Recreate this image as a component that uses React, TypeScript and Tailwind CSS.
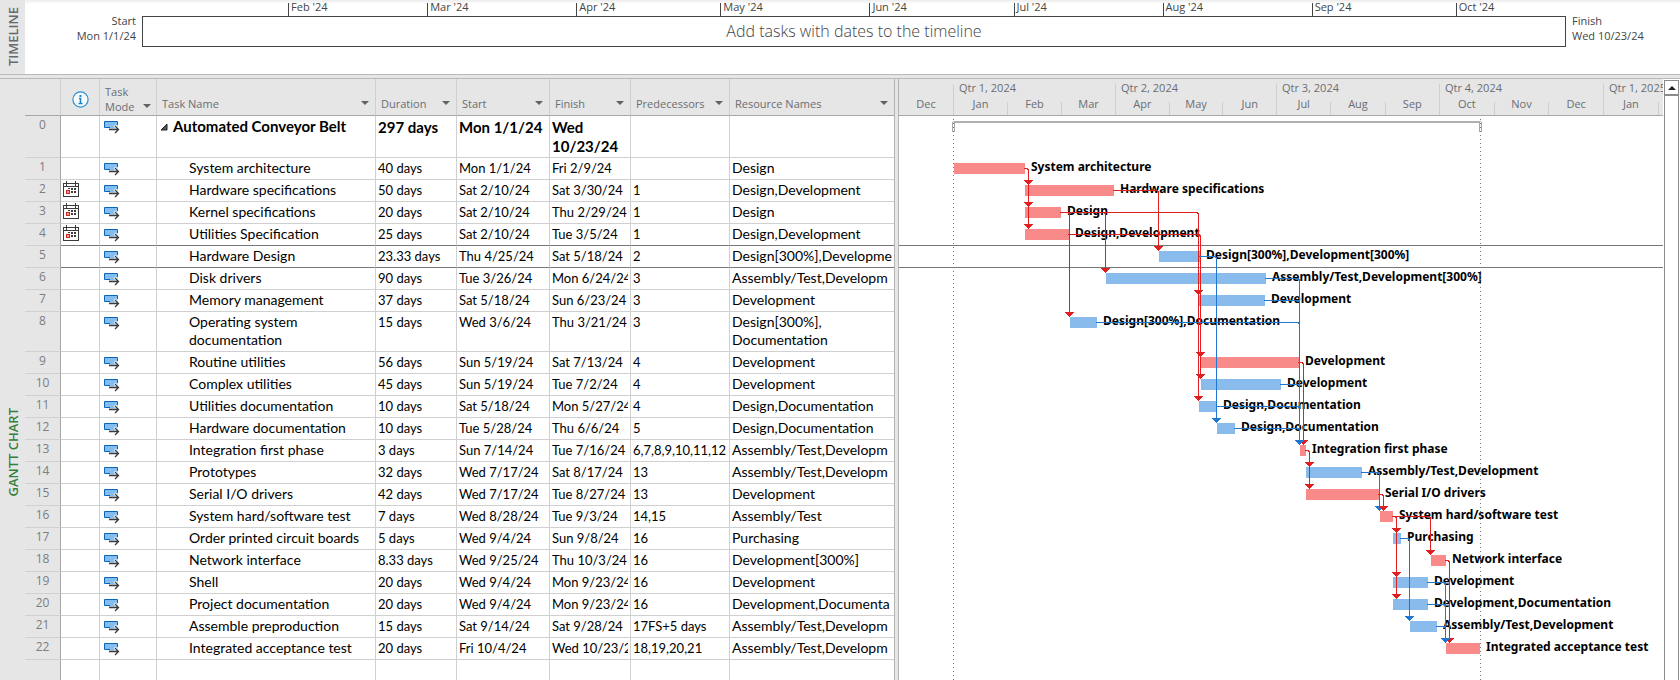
import React from "react";

type Task = {
  id: number;
  name: string;
  duration: string;
  start: string;
  finish: string;
  pred: string;
  res: string;
  calendar?: boolean;
  bar?: [number, number];
  critical?: boolean;
  label?: string;
};

const TASKS: Task[] = [
  { id: 0, name: "Automated Conveyor Belt", duration: "297 days", start: "Mon 1/1/24", finish: "Wed 10/23/24", pred: "", res: "" },
  { id: 1, name: "System architecture", duration: "40 days", start: "Mon 1/1/24", finish: "Fri 2/9/24", pred: "", res: "Design", bar: [55, 126], critical: true, label: "System architecture" },
  { id: 2, name: "Hardware specifications", duration: "50 days", start: "Sat 2/10/24", finish: "Sat 3/30/24", pred: "1", res: "Design,Development", calendar: true, bar: [126, 215], critical: true, label: "Hardware specifications" },
  { id: 3, name: "Kernel specifications", duration: "20 days", start: "Sat 2/10/24", finish: "Thu 2/29/24", pred: "1", res: "Design", calendar: true, bar: [126, 162], critical: true, label: "Design" },
  { id: 4, name: "Utilities Specification", duration: "25 days", start: "Sat 2/10/24", finish: "Tue 3/5/24", pred: "1", res: "Design,Development", calendar: true, bar: [126, 170], critical: true, label: "Design,Development" },
  { id: 5, name: "Hardware Design", duration: "23.33 days", start: "Thu 4/25/24", finish: "Sat 5/18/24", pred: "2", res: "Design[300%],Development[300%]", bar: [260, 301], label: "Design[300%],Development[300%]" },
  { id: 6, name: "Disk drivers", duration: "90 days", start: "Tue 3/26/24", finish: "Mon 6/24/24", pred: "3", res: "Assembly/Test,Development[300%]", bar: [207, 367], label: "Assembly/Test,Development[300%]" },
  { id: 7, name: "Memory management", duration: "37 days", start: "Sat 5/18/24", finish: "Sun 6/23/24", pred: "3", res: "Development", bar: [300, 366], label: "Development" },
  { id: 8, name: "Operating system documentation", duration: "15 days", start: "Wed 3/6/24", finish: "Thu 3/21/24", pred: "3", res: "Design[300%], Documentation", bar: [171, 198], label: "Design[300%],Documentation" },
  { id: 9, name: "Routine utilities", duration: "56 days", start: "Sun 5/19/24", finish: "Sat 7/13/24", pred: "4", res: "Development", bar: [302, 400], critical: true, label: "Development" },
  { id: 10, name: "Complex utilities", duration: "45 days", start: "Sun 5/19/24", finish: "Tue 7/2/24", pred: "4", res: "Development", bar: [302, 382], label: "Development" },
  { id: 11, name: "Utilities documentation", duration: "10 days", start: "Sat 5/18/24", finish: "Mon 5/27/24", pred: "4", res: "Design,Documentation", bar: [300, 318], label: "Design,Documentation" },
  { id: 12, name: "Hardware documentation", duration: "10 days", start: "Tue 5/28/24", finish: "Thu 6/6/24", pred: "5", res: "Design,Documentation", bar: [318, 336], label: "Design,Documentation" },
  { id: 13, name: "Integration first phase", duration: "3 days", start: "Sun 7/14/24", finish: "Tue 7/16/24", pred: "6,7,8,9,10,11,12", res: "Assembly/Test,Development", bar: [401, 407], critical: true, label: "Integration first phase" },
  { id: 14, name: "Prototypes", duration: "32 days", start: "Wed 7/17/24", finish: "Sat 8/17/24", pred: "13", res: "Assembly/Test,Development", bar: [407, 463], label: "Assembly/Test,Development" },
  { id: 15, name: "Serial I/O drivers", duration: "42 days", start: "Wed 7/17/24", finish: "Tue 8/27/24", pred: "13", res: "Development", bar: [407, 480], critical: true, label: "Serial I/O drivers" },
  { id: 16, name: "System hard/software test", duration: "7 days", start: "Wed 8/28/24", finish: "Tue 9/3/24", pred: "14,15", res: "Assembly/Test", bar: [481, 494], critical: true, label: "System hard/software test" },
  { id: 17, name: "Order printed circuit boards", duration: "5 days", start: "Wed 9/4/24", finish: "Sun 9/8/24", pred: "16", res: "Purchasing", bar: [494, 502], label: "Purchasing" },
  { id: 18, name: "Network interface", duration: "8.33 days", start: "Wed 9/25/24", finish: "Thu 10/3/24", pred: "16", res: "Development[300%]", bar: [532, 547], critical: true, label: "Network interface" },
  { id: 19, name: "Shell", duration: "20 days", start: "Wed 9/4/24", finish: "Mon 9/23/24", pred: "16", res: "Development", bar: [494, 529], label: "Development" },
  { id: 20, name: "Project documentation", duration: "20 days", start: "Wed 9/4/24", finish: "Mon 9/23/24", pred: "16", res: "Development,Documentation", bar: [494, 529], label: "Development,Documentation" },
  { id: 21, name: "Assemble preproduction", duration: "15 days", start: "Sat 9/14/24", finish: "Sat 9/28/24", pred: "17FS+5 days", res: "Assembly/Test,Development", bar: [511, 538], label: "Assembly/Test,Development" },
  { id: 22, name: "Integrated acceptance test", duration: "20 days", start: "Fri 10/4/24", finish: "Wed 10/23/24", pred: "18,19,20,21", res: "Assembly/Test,Development", bar: [547, 581], critical: true, label: "Integrated acceptance test" },
];

/* [from task, x of the vertical run, target tasks, critical] */
const LINKS: [number, number, number[], boolean][] = [
  [1, 129, [2, 3, 4], true],
  [2, 259, [5], true],
  [3, 206, [6], true],
  [3, 170, [8], true],
  [3, 299, [7], true],
  [4, 299, [11], true],
  [4, 301, [9, 10], true],
  [5, 317, [12], false],
  [9, 404, [13], true],
  [6, 400, [13], false],
  [7, 400, [13], false],
  [8, 400, [13], false],
  [10, 400, [13], false],
  [11, 400, [13], false],
  [12, 400, [13], false],
  [13, 410, [14, 15], true],
  [14, 480, [16], false],
  [15, 484, [16], true],
  [16, 497, [17, 19, 20], true],
  [16, 531, [18], true],
  [17, 510, [21], false],
  [18, 550, [22], true],
  [19, 546, [22], false],
  [20, 546, [22], false],
  [21, 546, [22], false],
];

const rowHeight = (id: number) => (id === 0 ? 42 : id === 8 ? 40 : 22);
const ROW_Y = TASKS.map((_, i) => TASKS.slice(0, i).reduce((sum, t) => sum + rowHeight(t.id), 0));

const RULER = [
  { label: "", span: 147 },
  { label: "Feb '24", span: 139 },
  { label: "Mar '24", span: 149 },
  { label: "Apr '24", span: 144 },
  { label: "May '24", span: 149 },
  { label: "Jun '24", span: 144 },
  { label: "Jul '24", span: 149 },
  { label: "Aug '24", span: 149 },
  { label: "Sep '24", span: 144 },
  { label: "Oct '24", span: 110 },
];

const QUARTERS = [
  { label: "Qtr 1, 2024", months: ["Jan", "Feb", "Mar"], width: "w-[162px]" },
  { label: "Qtr 2, 2024", months: ["Apr", "May", "Jun"], width: "w-[161px]" },
  { label: "Qtr 3, 2024", months: ["Jul", "Aug", "Sep"], width: "w-[163px]" },
  { label: "Qtr 4, 2024", months: ["Oct", "Nov", "Dec"], width: "w-[164px]" },
  { label: "Qtr 1, 2025", months: ["Jan", "Feb", "Mar"], width: "w-[164px]" },
];

const COLUMNS = ["Task Name", "Duration", "Start", "Finish", "Predecessors", "Resource Names"];

function InfoIcon() {
  return (
    <svg className="mx-auto block" width="17" height="17" viewBox="0 0 17 17" role="img" aria-label="Indicators">
      <circle cx="8.5" cy="8.5" r="7.6" fill="#f7fbfe" stroke="#2b8fd4" strokeWidth="1.2" />
      <rect x="7.5" y="4" width="2" height="2" fill="#1f87d0" />
      <path d="M7 7.5H8.5V12M6.5 12.5H10.5" fill="none" stroke="#1f87d0" strokeWidth="1.6" />
    </svg>
  );
}

function ModeIcon() {
  return (
    <svg className="block" width="16" height="13" viewBox="0 0 16 13" role="img" aria-label="Auto scheduled">
      <path d="M0.5 0.5H13.5V7.5H5.5L2.5 6.5H0.5Z" fill="#83bdf0" />
      <path d="M13.5 4V0.5H0.5V6.5H6" fill="none" stroke="#0a66b8" />
      <path d="M10.5 4.5L13 7" fill="none" stroke="#fff" strokeWidth="2.5" />
      <path d="M5 8.5H14.5M11 5L14.5 8.5L11 12" fill="none" stroke="#3b3b3b" strokeWidth="1.3" />
    </svg>
  );
}

function CalendarIcon() {
  return (
    <svg className="block" width="16" height="17" viewBox="0 0 16 17" role="img" aria-label="Date constraint">
      <rect x="0.5" y="2.5" width="15" height="13" fill="#fff" stroke="#3b3b3b" />
      <path d="M0 5.5H16M3.5 0V5M12.5 0V5" stroke="#3b3b3b" fill="none" />
      <path d="M5 7h2v1h-2zM8 7h2v2h-2zM11 7h2v2h-2zM8 10h2v2h-2zM11 10h2v2h-2z" fill="#3b3b3b" />
      <rect x="3.5" y="9.5" width="3" height="3" fill="#f79a9a" stroke="#d8231c" />
    </svg>
  );
}

function FilterButton({ label }: { label: string }) {
  return (
    <button type="button" aria-label={`Filter ${label}`} className="mb-1 flex h-2 w-2 items-center justify-center">
      <svg width="8" height="4" viewBox="0 0 8 4">
        <path d="M0 0H8L4 4Z" fill="#5f6368" />
      </svg>
    </button>
  );
}

function Timeline() {
  return (
    <section className="flex h-[75px] border-b border-[#b9b9b9]">
      <div className="flex w-[25px] shrink-0 items-center justify-center bg-[#e6e6e6]">
        <h2 className="rotate-180 text-[13px] leading-4 font-semibold text-[#66696d] [writing-mode:vertical-rl]">TIMELINE</h2>
      </div>
      <div className="flex flex-1 bg-linear-to-b from-[#ececec] to-white to-[4px] text-[11px] leading-[15px] text-[#444]">
        <div className="w-[117px] shrink-0 pt-[13px] pr-[6px] text-right">
          <p>Start</p>
          <p>Mon 1/1/24</p>
        </div>
        <div className="flex-1">
          <div className="flex h-4 pt-[3px]">
            {RULER.map((m) => (
              <div
                key={m.label}
                style={{ flexGrow: m.span }}
                className={m.label ? "min-w-0 basis-0 border-l border-[#444] leading-[8px]" : "basis-0"}
              >
                <span className="pl-[2px] whitespace-nowrap">{m.label}</span>
              </div>
            ))}
          </div>
          <div className="flex h-[31px] items-center justify-center border border-[#444] bg-white text-[16px] font-light text-[#444]">
            Add tasks with dates to the timeline
          </div>
        </div>
        <div className="w-[114px] shrink-0 pt-[13px] pl-[6px]">
          <p>Finish</p>
          <p>Wed 10/23/24</p>
        </div>
      </div>
    </section>
  );
}

const LINE = "border-r border-b border-[#d0d0d0]";
const HEAD = "h-[37px] border-r border-b border-r-[#cfcfcf] border-b-[#a6a6a6] bg-[#e6e6e6] p-0 align-bottom font-normal";

function TaskTable() {
  return (
    <table className="w-[870px] shrink-0 table-fixed border-separate border-spacing-0 border-r border-[#b4b4b4] text-left">
      <colgroup>
        <col className="w-[36px]" />
        <col className="w-[39px]" />
        <col className="w-[57px]" />
        <col className="w-[219px]" />
        <col className="w-[81px]" />
        <col className="w-[93px]" />
        <col className="w-[81px]" />
        <col className="w-[99px]" />
        <col />
      </colgroup>
      <thead className="text-[11px] leading-[15px] text-[#6a6d72]">
        <tr>
          <th className={HEAD} aria-label="ID" />
          <th className={`${HEAD} pb-[7px]`}>
            <InfoIcon />
          </th>
          <th className={HEAD}>
            <div className="flex items-end justify-between pr-[5px] pb-px pl-[5px]">
              <span>
                Task
                <br />
                Mode
              </span>
              <FilterButton label="Task Mode" />
            </div>
          </th>
          {COLUMNS.map((c) => (
            <th key={c} className={c === "Resource Names" ? `${HEAD} border-r-0` : HEAD}>
              <div className="flex items-end justify-between pr-[6px] pb-1 pl-[5px]">
                {c}
                <FilterButton label={c} />
              </div>
            </th>
          ))}
        </tr>
      </thead>
      <tbody className="font-[Lato,sans-serif] text-[14px] leading-[18px] text-black">
        {TASKS.map((t) => {
          const summary = t.id === 0;
          const tall = t.id === 8;
          const edge = t.id === 4 || t.id === 5 ? `${LINE} border-b-[#777]` : LINE;
          const cell = `${edge} p-0 align-top`;
          const value = summary
            ? "overflow-hidden pt-[2px] pl-[2px]"
            : "mr-[2px] overflow-hidden pt-px pl-[2px] text-[13px] whitespace-nowrap";
          const resource = tall ? "pt-px pl-[2px]" : "h-[19px] overflow-hidden pt-px pr-px pl-[2px] break-all";
          return (
            <tr key={t.id} className={summary ? "h-[42px] text-[15px] leading-[19px] font-bold" : tall ? "h-[40px]" : "h-[22px]"}>
              <th className="border-r border-b border-r-[#a6a6a6] border-b-[#d0d0d0] bg-[#e6e6e6] p-0 align-top font-['Open_Sans',sans-serif] text-[12px] leading-[17px] font-normal text-[#7b7e82]">
                <div className="text-center">{t.id}</div>
              </th>
              <td className={cell}>
                {t.calendar && (
                  <div className="pt-px pl-[2px]">
                    <CalendarIcon />
                  </div>
                )}
              </td>
              <td className={cell}>
                <div className="pt-[5px] pl-1">
                  <ModeIcon />
                </div>
              </td>
              <td className={cell}>
                {summary ? (
                  <div className="flex gap-[5px] pt-px pl-1">
                    <button type="button" aria-label="Collapse summary task" className="mt-[7px] h-[7px] w-[7px]">
                      <svg width="7" height="7" viewBox="0 0 7 7">
                        <path d="M6 0V6H0Z" fill="#555" stroke="#222" />
                      </svg>
                    </button>
                    {t.name}
                  </div>
                ) : (
                  <div className={tall ? "pt-px pr-10 pl-8" : "pt-px pl-8 whitespace-nowrap"}>{t.name}</div>
                )}
              </td>
              {[t.duration, t.start, t.finish, t.pred].map((v, i) => (
                <td key={i} className={cell}>
                  <div className={value}>{v}</div>
                </td>
              ))}
              <td className={`${cell} border-r-0`}>
                <div className={resource}>{t.res}</div>
              </td>
            </tr>
          );
        })}
        <tr className="h-5">
          <th className="border-r border-[#a6a6a6] bg-[#e6e6e6]" />
          {[1, 2, 3, 4, 5, 6, 7].map((i) => (
            <td key={i} className="border-r border-[#d0d0d0]" />
          ))}
          <td />
        </tr>
      </tbody>
    </table>
  );
}

function GanttHeader() {
  return (
    <div className="flex h-[37px] overflow-hidden border-b border-[#a6a6a6] bg-[#e6e6e6] pt-[5px] text-[11px] leading-[15px] text-[#6a6d72]">
      <div className="flex w-[54px] shrink-0 items-end justify-center pb-1">Dec</div>
      {QUARTERS.map((q) => (
        <div key={q.label} className={`${q.width} flex shrink-0 flex-col justify-between border-l border-[#cfcfcf]`}>
          <div className="-mt-1 pl-[5px] whitespace-nowrap">{q.label}</div>
          <div className="flex">
            {q.months.map((m, i) => (
              <div
                key={m}
                className={
                  i === 0
                    ? "flex h-[13px] flex-1 items-end justify-center pb-1"
                    : "flex h-[13px] flex-1 items-end justify-center border-l border-[#cfcfcf] pb-1"
                }
              >
                {m}
              </div>
            ))}
          </div>
        </div>
      ))}
    </div>
  );
}

function GanttChart() {
  return (
    <svg className="block h-[564px] w-full" role="img" aria-label="Gantt chart" shapeRendering="crispEdges">
      <path d="M0 129.5H2000M0 151.5H2000" stroke="#777" />
      <rect x="54" y="5" width="528" height="2" fill="#b0b0b0" />
      <path d="M53.5 5.5V15.5H55.5V5.5M580.5 5.5V15.5H582.5V5.5" fill="#fff" stroke="#a6a6a6" />
      {TASKS.map(
        (t) =>
          t.bar && (
            <rect
              key={t.id}
              x={t.bar[0]}
              y={ROW_Y[t.id] + 5}
              width={t.bar[1] - t.bar[0]}
              height="11"
              fill={t.critical ? "#f88b89" : "#8abbed"}
            />
          ),
      )}
      <g className="font-['Noto_Sans',sans-serif] text-[12px] font-bold" fill="#000">
        {TASKS.map(
          (t) =>
            t.bar && (
              <text key={t.id} x={t.bar[1] + 6} y={ROW_Y[t.id] + 13}>
                {t.label}
              </text>
            ),
        )}
      </g>
      {LINKS.map(([from, x, targets, critical], i) => {
        const color = critical ? "#e02020" : "#1f77d0";
        const y = ROW_Y[from] + 10;
        const x0 = TASKS[from].bar![1] - 1;
        const last = ROW_Y[targets[targets.length - 1]];
        return (
          <g key={i}>
            <path
              d={x0 < x - 1 ? `M${x0} ${y + 0.5}H${x - 1}L${x + 0.5} ${y + 2}V${last + 2}` : `M${x + 0.5} ${y}V${last + 2}`}
              fill="none"
              stroke={color}
            />
            {targets.map((id) => (
              <path key={id} d={`M${x - 4} ${ROW_Y[id]}h9v1h-1v1h-1v1h-1v1h-1v1h-1v-1h-1v-1h-1v-1h-1v-1h-1z`} fill={color} />
            ))}
          </g>
        );
      })}
      <path d="M54.5 3V564M581.5 3V564" stroke="#777" strokeDasharray="1 3" />
    </svg>
  );
}

function ScrollBar() {
  return (
    <div className="flex w-[17px] shrink-0 flex-col bg-white pt-px pl-px">
      <button
        type="button"
        aria-label="Scroll up"
        className="flex h-4 w-[15px] items-center justify-center border border-b-2 border-[#8a8a8a] bg-white"
      >
        <svg width="8" height="4" viewBox="0 0 8 4">
          <path d="M4 0L8 4H0Z" fill="#222" />
        </svg>
      </button>
      <div className="w-[15px] flex-1 border-x border-[#8a8a8a]" />
    </div>
  );
}

export default function App() {
  return (
    <main className="flex min-h-screen flex-col overflow-hidden bg-white font-['Open_Sans',sans-serif]">
      <Timeline />
      <div className="h-[3px] bg-[#e6e6e6]" />
      <section className="flex flex-1 border-t border-[#b9b9b9]">
        <div className="flex w-[25px] shrink-0 items-center justify-center bg-[#e6e6e6] pt-[146px]">
          <h2 className="rotate-180 text-[13px] leading-4 font-semibold whitespace-nowrap text-[#35803a] [writing-mode:vertical-rl]">
            GANTT CHART
          </h2>
        </div>
        <TaskTable />
        <div className="w-[3px] shrink-0 bg-[#e6e6e6]" />
        <div className="min-w-0 flex-1 border-l border-[#b4b4b4]">
          <GanttHeader />
          <GanttChart />
        </div>
        <ScrollBar />
      </section>
    </main>
  );
}
